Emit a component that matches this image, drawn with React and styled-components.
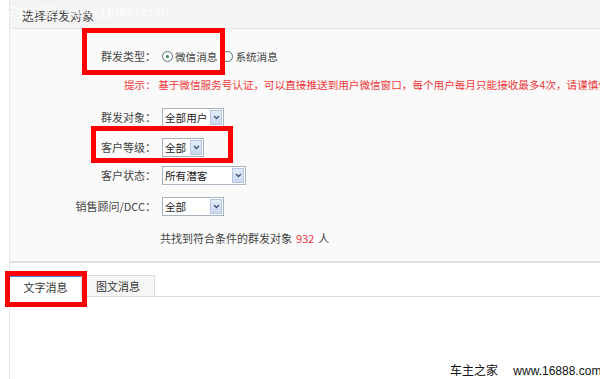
import styled, { createGlobalStyle } from "styled-components"

const GlobalStyle = createGlobalStyle`
  html, body {
    margin: 0;
    padding: 0;
    background: #ffffff;
  }
  body {
    font-family: "Noto Sans CJK SC", "Liberation Sans", sans-serif;
    color: #333;
  }
`

const Page = styled.div`
  position: relative;
  width: 600px;
  height: 379px;
  overflow: hidden;
  background: #fff;
`

const Frame = styled.div`
  margin-left: 9px;
  height: 100%;
  border-left: 1px solid #e6e6e6;
  display: flex;
  flex-direction: column;
`

const Panel = styled.div`
  background: #fafafa;
  border-bottom: 2px solid #dedede;
  padding-bottom: 15px;
`

const Header = styled.div`
  height: 29px;
  background: #f4f4f4;
  border-bottom: 1px solid #e6e6e6;
  display: flex;
  align-items: center;
  padding-left: 12px;
  padding-top: 2px;
  box-sizing: border-box;
  font-size: 12px;
  color: #444;
`

const Form = styled.div`
  display: flex;
  flex-direction: column;
  padding-top: 17px;
`

const Row = styled.div`
  display: flex;
  align-items: center;
  height: ${p => p.$h || 20}px;
  margin-top: ${p => p.$top || 0}px;
  font-size: 11px;
`

const Label = styled.div`
  width: 146px;
  text-align: right;
  color: #444;
  white-space: nowrap;
`

const Field = styled.div`
  margin-left: 6px;
  display: flex;
  align-items: center;
`

const Radio = styled.span`
  width: 9px;
  height: 9px;
  border-radius: 50%;
  border: 1px solid #5a6a80;
  background: #fff;
  display: inline-flex;
  align-items: center;
  justify-content: center;
  margin-right: 2px;
  &::after {
    content: "";
    width: 3px;
    height: 3px;
    border-radius: 50%;
    background: ${p => (p.$checked ? "#2e8b57" : "transparent")};
  }
`

const RadioText = styled.span`
  color: #444;
  font-size: 10.6px;
  margin-right: 5px;
`

const Hint = styled.div`
  padding-left: 114px;
  color: #f03838;
  white-space: nowrap;
  font-size: 10.6px;
  height: 16px;
  margin-top: 10px;
  display: flex;
  align-items: center;
`

const SelectBox = styled.div`
  width: ${p => p.$w}px;
  height: 19px;
  box-sizing: border-box;
  border: 1px solid #a9b2bf;
  background: #fff;
  display: flex;
  align-items: stretch;
`

const SelectText = styled.span`
  flex: 1;
  padding-left: 2px;
  display: flex;
  align-items: center;
  font-size: 10.6px;
  color: #222;
  white-space: nowrap;
  overflow: hidden;
`

const Arrow = styled.span`
  width: 10px;
  margin: 1px;
  background: linear-gradient(#e4edf9, #c9d9f0);
  border: 1px solid #b4c6e2;
  display: flex;
  align-items: center;
  justify-content: center;
`

const Count = styled.div`
  padding-left: 150px;
  margin-top: 14px;
  height: 16px;
  display: flex;
  align-items: center;
  font-size: 11px;
  color: #444;
`

const Num = styled.span`
  color: #f03838;
  margin: 0 4px;
`

const TabBar = styled.div`
  margin-top: 12px;
  display: flex;
  align-items: flex-end;
  height: 21px;
  border-bottom: 1px solid #dcdcdc;
`

const Tab = styled.div`
  width: ${p => p.$w}px;
  box-sizing: border-box;
  display: flex;
  align-items: center;
  justify-content: center;
  font-size: 11px;
  color: #333;
  background: ${p => (p.$active ? "#fff" : "#f6f6f6")};
  border-top: ${p => (p.$active ? "2px solid #3d8fe0" : "1px solid #dcdcdc")};
  border-right: 1px solid #dcdcdc;
  margin-bottom: ${p => (p.$active ? "-1px" : "0")};
  height: ${p => (p.$active ? "22px" : "21px")};
`

const Content = styled.div`
  flex: 1;
  background: #fff;
`

const Mark = styled.div`
  position: absolute;
  left: ${p => p.$x}px;
  top: ${p => p.$y}px;
  width: ${p => p.$w}px;
  height: ${p => p.$h}px;
  box-sizing: border-box;
  border: 5px solid #ff0000;
  pointer-events: none;
`

const Watermark = styled.div`
  position: absolute;
  left: ${p => p.$x}px;
  top: ${p => p.$y}px;
  font-family: "Liberation Sans", "Noto Sans CJK SC", sans-serif;
  font-size: ${p => p.$size}px;
  color: ${p => p.$color};
  white-space: nowrap;
  word-spacing: ${p => p.$gap}px;
`

const Chevron = () => (
  <svg width="7" height="5" viewBox="0 0 7 5">
    <path d="M1 1 L3.5 3.5 L6 1" fill="none" stroke="#3f5478" strokeWidth="1.3" />
  </svg>
)

const Select = ({ w, value }) => (
  <SelectBox $w={w}>
    <SelectText>{value}</SelectText>
    <Arrow>
      <Chevron />
    </Arrow>
  </SelectBox>
)

const selects = [
  { label: "群发对象：", value: "全部用户", w: 62, top: 15 },
  { label: "客户等级：", value: "全部", w: 42, top: 10 },
  { label: "客户状态：", value: "所有潜客", w: 84, top: 8 },
  { label: "销售顾问/DCC：", value: "全部", w: 62, top: 11 },
]

export default function App() {
  return (
    <Page>
      <GlobalStyle />
      <Frame>
        <Panel>
          <Header>选择群发对象</Header>
          <Form>
            <Row>
              <Label>群发类型：</Label>
              <Field>
                <Radio $checked />
                <RadioText>微信消息</RadioText>
                <Radio />
                <RadioText>系统消息</RadioText>
              </Field>
            </Row>
            <Hint>
              提示： 基于微信服务号认证，可以直接推送到用户微信窗口，每个用户每月只能接收最多4次，请谨慎使用
            </Hint>
            {selects.map(s => (
              <Row key={s.label} $top={s.top}>
                <Label>{s.label}</Label>
                <Field>
                  <Select w={s.w} value={s.value} />
                </Field>
              </Row>
            ))}
            <Count>
              共找到符合条件的群发对象<Num>932</Num>人
            </Count>
          </Form>
        </Panel>
        <TabBar>
          <Tab $w={72} $active>文字消息</Tab>
          <Tab $w={73}>图文消息</Tab>
        </TabBar>
        <Content />
      </Frame>

      <Mark $x={82} $y={28} $w={143} $h={47} />
      <Mark $x={91} $y={126} $w={142} $h={37} />
      <Mark $x={5} $y={271} $w={82} $h={36} />

      <Watermark $x={0} $y={1} $size={14} $gap={6} $color="rgba(255,255,255,0.9)">
        车主之家 www.16888.com
      </Watermark>
      <Watermark $x={450} $y={361} $size={12} $gap={12} $color="#111">
        车主之家 www.16888.com
      </Watermark>
    </Page>
  )
}
